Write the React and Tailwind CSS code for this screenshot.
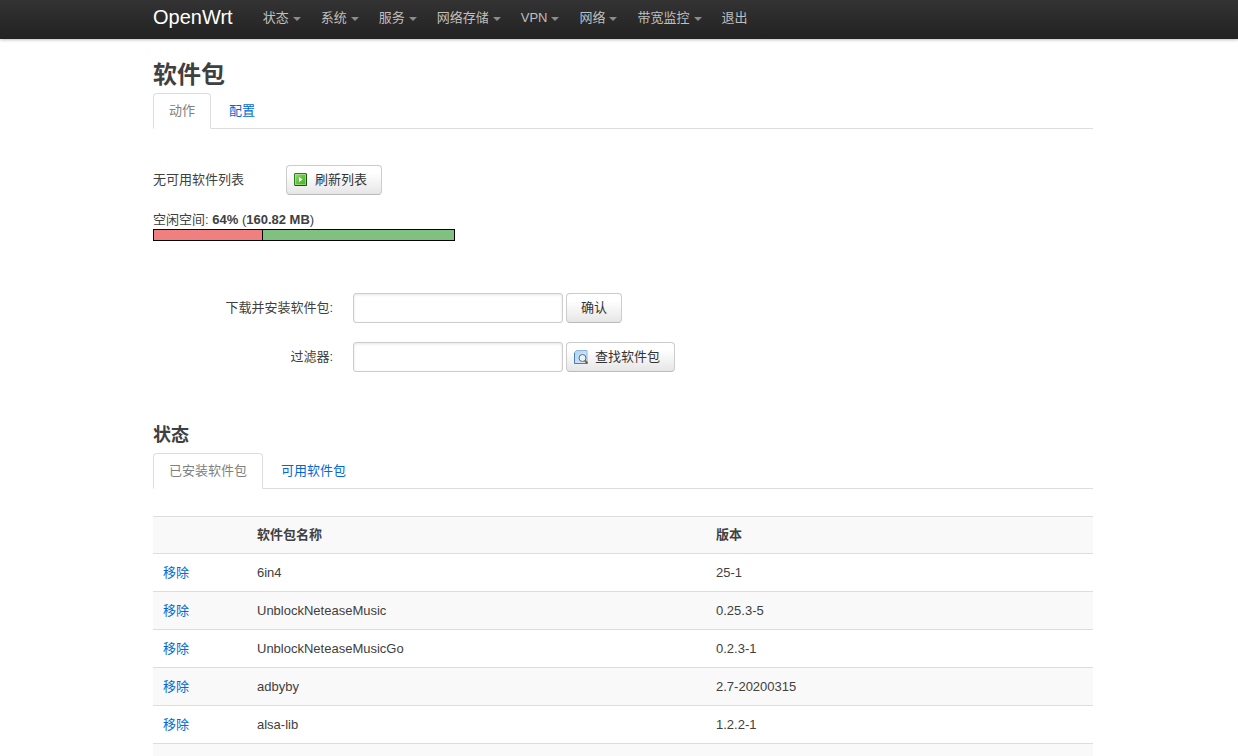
import React from "react";

const menus = [
  { label: "状态", dropdown: true },
  { label: "系统", dropdown: true },
  { label: "服务", dropdown: true },
  { label: "网络存储", dropdown: true },
  { label: "VPN", dropdown: true },
  { label: "网络", dropdown: true },
  { label: "带宽监控", dropdown: true },
  { label: "退出", dropdown: false },
];

const packages = [
  { name: "6in4", version: "25-1" },
  { name: "UnblockNeteaseMusic", version: "0.25.3-5" },
  { name: "UnblockNeteaseMusicGo", version: "0.2.3-1" },
  { name: "adbyby", version: "2.7-20200315" },
  { name: "alsa-lib", version: "1.2.2-1" },
];

const freePercent = 64;

function Navbar() {
  return (
    <header className="h-[39px] bg-gradient-to-b from-[#333] to-[#222] shadow-[0_1px_3px_rgba(0,0,0,0.25)]">
      <div className="mx-auto flex max-w-[948px] items-start pl-2">
        <a href="#" className="mr-5 py-2 text-xl leading-[18px] text-white">
          OpenWrt
        </a>
        <nav>
          <ul className="flex">
            {menus.map((menu) => (
              <li key={menu.label}>
                <a href="#" className="flex items-center px-[10px] py-[9px] whitespace-nowrap text-[#bfbfbf] hover:text-white">
                  {menu.label}
                  {menu.dropdown && (
                    <span className="mt-[2px] ml-1 h-0 w-0 border-x-4 border-t-4 border-x-transparent border-t-[#8c8c8c]" />
                  )}
                </a>
              </li>
            ))}
          </ul>
        </nav>
      </div>
    </header>
  );
}

function Tabs({ items }) {
  return (
    <ul className="flex border-b border-[#ddd]">
      {items.map((item, i) => (
        <li key={item} className="-mb-px mr-[2px]">
          <a
            href="#"
            className={
              i === 0
                ? "block rounded-t border border-[#ddd] border-b-white bg-white px-[15px] leading-[34px] text-[#808080]"
                : "block rounded-t border border-transparent px-[15px] leading-[34px] text-[#0069d6]"
            }
          >
            {item}
          </a>
        </li>
      ))}
    </ul>
  );
}

function Button({ icon, children }) {
  return (
    <button
      type="button"
      className={`flex h-[30px] items-center rounded border border-[#ccc] border-b-[#bbb] bg-gradient-to-b from-white from-25% to-[#e6e6e6] whitespace-nowrap text-[#333] ${
        icon ? "gap-[7px] pr-[14px] pl-[7px]" : "px-[14px]"
      }`}
    >
      {icon}
      {children}
    </button>
  );
}

function ReloadIcon() {
  return (
    <svg width="14" height="14" viewBox="0 0 14 14" aria-hidden="true">
      <defs>
        <linearGradient id="reload" x1="0" y1="0" x2="1" y2="1">
          <stop offset="0" stopColor="#9be07c" />
          <stop offset="0.5" stopColor="#62c242" />
          <stop offset="1" stopColor="#48ad2c" />
        </linearGradient>
      </defs>
      <rect x="0.5" y="0.5" width="12" height="12" rx="0.5" fill="url(#reload)" stroke="#2f7a22" />
      <path d="M12.5 1v11.5H1" fill="none" stroke="#1c5216" />
      <rect x="1.5" y="1.5" width="10" height="10" fill="none" stroke="#b5eb9c" strokeOpacity="0.6" />
      <path d="M5 4v5l3.5-2.5z" fill="#fff" />
    </svg>
  );
}

function FindIcon() {
  return (
    <svg width="14" height="14" viewBox="0 0 14 14" aria-hidden="true">
      <defs>
        <linearGradient id="sheet" x1="0" y1="0" x2="1" y2="1">
          <stop offset="0" stopColor="#a9d3f6" />
          <stop offset="1" stopColor="#dceefc" />
        </linearGradient>
      </defs>
      <path d="M2.5 0.5h10.5v13H0.5v-11z" fill="url(#sheet)" stroke="#8db4da" />
      <path d="M0.5 3v10.5h13" fill="none" stroke="#487fb5" />
      <circle cx="8.5" cy="8" r="3.5" fill="#e6f2fc" stroke="#6b6b6b" />
      <path d="M11 10.6l2.4 2.6" stroke="#8a5526" strokeWidth="2" />
    </svg>
  );
}

function Field({ id, label, children }) {
  return (
    <div className="flex items-center">
      <label htmlFor={id} className="w-[180px] pb-px text-right">
        {label}
      </label>
      <input
        id={id}
        type="text"
        className="mr-[3px] ml-5 h-[30px] w-[210px] rounded-[3px] border border-[#ccc] bg-white px-1 shadow-[inset_0_1px_3px_rgba(0,0,0,0.1)] outline-none focus:border-[#52a8ec]"
      />
      {children}
    </div>
  );
}

export default function App() {
  return (
    <div className="h-screen overflow-hidden bg-white font-['Liberation_Sans','Noto_Sans_CJK_SC',sans-serif] text-[13px] leading-[18px] text-[#404040]">
      <Navbar />

      <main className="mx-auto max-w-[948px] pl-2">
        <h2 className="pt-[18px] text-2xl leading-9 font-bold">软件包</h2>
        <Tabs items={["动作", "配置"]} />

        <section className="mt-9">
          <div className="flex items-center">
            <span className="w-[133px]">无可用软件列表</span>
            <Button icon={<ReloadIcon />}>刷新列表</Button>
          </div>

          <p className="mt-4">
            空闲空间: <strong>{freePercent}%</strong> (<strong>160.82 MB</strong>)
          </p>
          <div className="flex h-3 w-[302px] border border-black bg-[#80c080]">
            <div
              className="box-content border-r border-black bg-[#f08080]"
              style={{ width: `${100 - freePercent}%` }}
            />
          </div>
        </section>

        <form className="mt-[52px] flex flex-col gap-[19px]">
          <Field id="url" label="下载并安装软件包:">
            <Button>确认</Button>
          </Field>
          <Field id="query" label="过滤器:">
            <Button icon={<FindIcon />}>查找软件包</Button>
          </Field>
        </form>

        <h3 className="mt-[45px] text-lg leading-9 font-bold">状态</h3>
        <Tabs items={["已安装软件包", "可用软件包"]} />

        <table className="mt-[27px] w-full table-fixed text-left">
          <thead>
            <tr className="border-t border-[#ddd] bg-[#f9f9f9]">
              <th className="w-[94px] px-[10px]" />
              <th className="w-[459px] px-[10px] py-[9px] font-bold">软件包名称</th>
              <th className="px-[10px] py-[9px] font-bold">版本</th>
            </tr>
          </thead>
          <tbody>
            {packages.map((pkg) => (
              <tr key={pkg.name} className="border-t border-[#ddd] even:bg-[#f9f9f9]">
                <td className="px-[10px] pt-[10px] pb-[9px]">
                  <a href="#" className="text-[#0069d6] hover:underline">
                    移除
                  </a>
                </td>
                <td className="px-[10px] pt-[10px] pb-[9px]">{pkg.name}</td>
                <td className="px-[10px] pt-[10px] pb-[9px]">{pkg.version}</td>
              </tr>
            ))}
            <tr className="border-t border-[#ddd] even:bg-[#f9f9f9]">
              <td colSpan={3} className="h-9" />
            </tr>
          </tbody>
        </table>
      </main>
    </div>
  );
}
